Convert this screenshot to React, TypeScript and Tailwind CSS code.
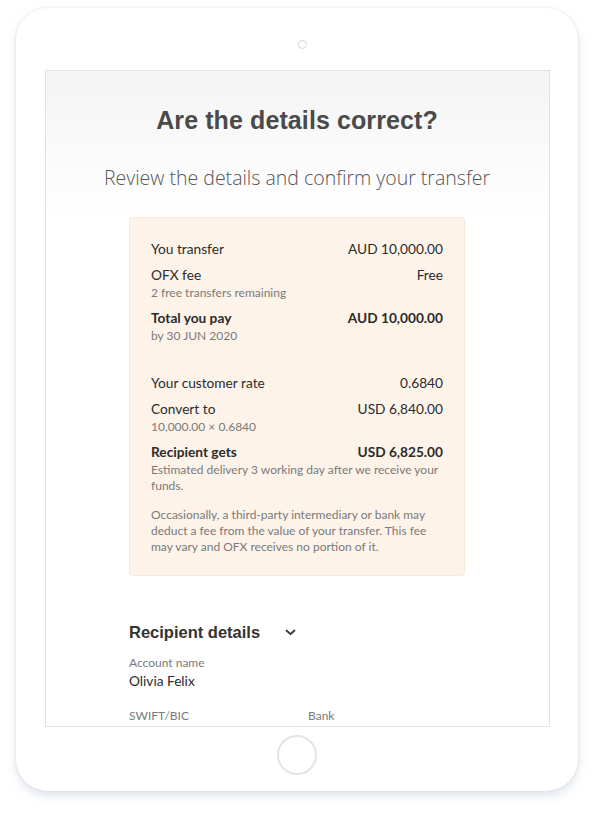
import React from "react";

const body = { fontFamily: "Lato, 'Noto Sans', sans-serif" } as React.CSSProperties;
const narrow = { fontFamily: "'Liberation Sans Narrow', 'Liberation Sans', sans-serif" } as React.CSSProperties;
const open = { fontFamily: "'Open Sans', 'Noto Sans', sans-serif" } as React.CSSProperties;

function Row({ l, r, bold }: { l: string; r: string; bold?: boolean }) {
  return (
    <div className={`flex justify-between h-[20px] items-center text-[13.7px] text-[#2b2b2b] ${bold ? "font-bold" : ""}`}>
      <span>{l}</span>
      <span>{r}</span>
    </div>
  );
}

function Small({ children }: { children: React.ReactNode }) {
  return <div className="text-[12px] leading-[16px] text-[#7a7a7a]">{children}</div>;
}

export default function App() {
  return (
    <div className="w-[593px] h-[816px] bg-white overflow-hidden" style={body}>
      <div className="ml-[16px] mt-[8px] w-[562px] h-[783px] rounded-[32px] bg-white shadow-[0_5px_10px_rgba(170,180,200,0.35),0_0_3px_rgba(170,180,200,0.3)] flex flex-col items-center">
        <div className="mt-[32px] ml-[10px] w-[9px] h-[9px] rounded-full border-[1.5px] border-[#d6d6d6]" />
        <div className="mt-[21px] w-[505px] h-[657px] border border-[#e2e2e2] overflow-hidden flex flex-col items-center">
          <div className="w-full bg-gradient-to-b from-[#f4f4f4] to-white flex flex-col items-center pt-[34px] pb-[26px]">
            <h1 className="text-[25px] leading-[30px] font-bold text-[#4a4a4a] tracking-[0.1px]" style={narrow}>
              Are the details correct?
            </h1>
            <p className="mt-[30px] text-[19.5px] leading-[26px] text-[#555555] font-light" style={open}>
              Review the details and confirm your transfer
            </p>
          </div>
          <div className="w-[336px] bg-[#fdf3e9] border border-[#f6e9da] rounded-[4px] px-[21px] pt-[21px] pb-[20px]">
            <Row l="You transfer" r="AUD 10,000.00" />
            <div className="mt-[6px]">
              <Row l="OFX fee" r="Free" />
              <Small>2 free transfers remaining</Small>
            </div>
            <div className="mt-[7px]">
              <Row l="Total you pay" r="AUD 10,000.00" bold />
              <Small>by 30 JUN 2020</Small>
            </div>
            <div className="mt-[29px]">
              <Row l="Your customer rate" r="0.6840" />
            </div>
            <div className="mt-[6px]">
              <Row l="Convert to" r="USD 6,840.00" />
              <Small>10,000.00 × 0.6840</Small>
            </div>
            <div className="mt-[7px]">
              <Row l="Recipient gets" r="USD 6,825.00" bold />
              <Small>Estimated delivery 3 working day after we receive your funds.</Small>
            </div>
            <div className="mt-[13px]">
              <Small>
                Occasionally, a third-party intermediary or bank may deduct a fee from the value of your transfer. This fee may vary and OFX receives no portion of it.
              </Small>
            </div>
          </div>
          <div className="w-[336px] mt-[44px]">
            <div className="flex items-center h-[24px]">
              <span className="text-[16.5px] font-bold text-[#333333]" style={narrow}>Recipient details</span>
              <svg className="ml-[25px]" width="11" height="7" viewBox="0 0 11 7" fill="none">
                <path d="M1.5 1.5 L5.5 5.2 L9.5 1.5" stroke="#333" strokeWidth="1.8" strokeLinecap="round" strokeLinejoin="round" />
              </svg>
            </div>
            <div className="mt-[11px] text-[12px] leading-[15px] text-[#7a7a7a]">Account name</div>
            <div className="mt-[1px] text-[13.7px] leading-[20px] text-[#2b2b2b]">Olivia Felix</div>
            <div className="mt-[17px] flex text-[12px] leading-[15px] text-[#7a7a7a]">
              <span className="w-[179px]">SWIFT/BIC</span>
              <span>Bank</span>
            </div>
          </div>
        </div>
        <div className="mt-[8px] w-[40px] h-[40px] rounded-full border-[2px] border-[#e4e4e4]" />
      </div>
    </div>
  );
}
